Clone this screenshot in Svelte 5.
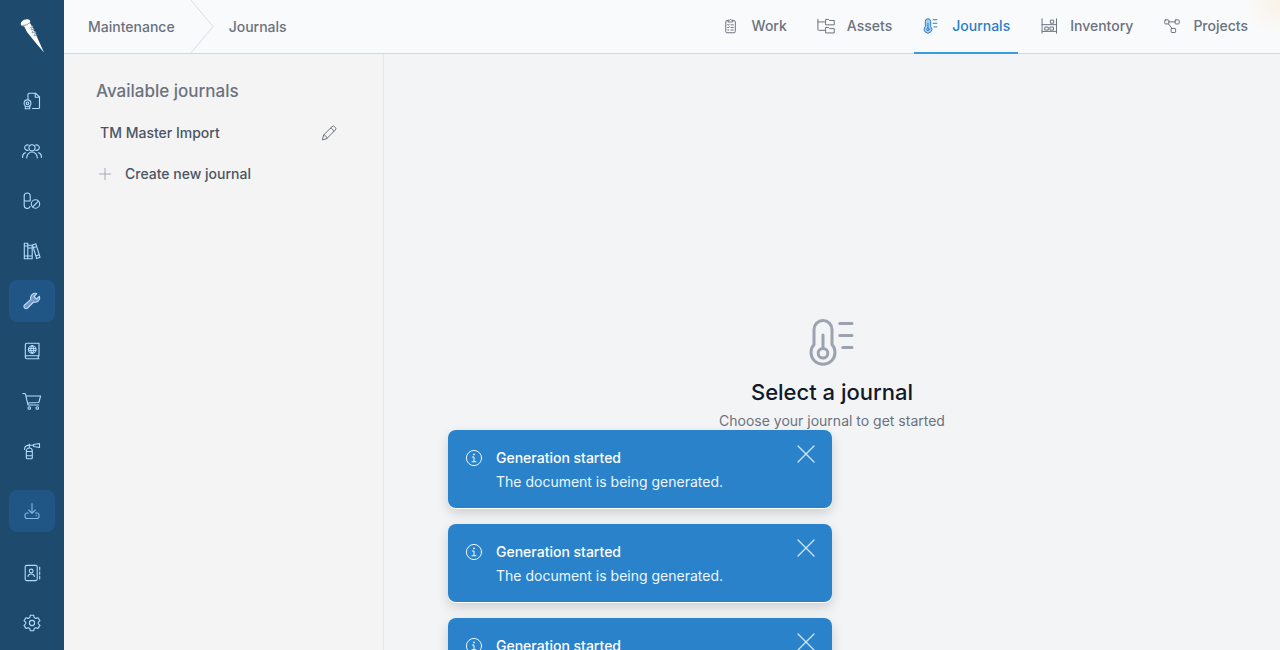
<script>
  const nav = [
    { id: 'certificates', label: 'Certificates' },
    { id: 'crew', label: 'Crew' },
    { id: 'medical', label: 'Medical' },
    { id: 'library', label: 'Library' },
    { id: 'maintenance', label: 'Maintenance', active: true },
    { id: 'logbook', label: 'Logbook' },
    { id: 'purchasing', label: 'Purchasing' },
    { id: 'safety', label: 'Safety' }
  ];
  const lower = [
    { id: 'contacts', label: 'Contacts' },
    { id: 'settings', label: 'Settings' }
  ];
  const tabs = [
    { id: 'work', label: 'Work' },
    { id: 'assets', label: 'Assets' },
    { id: 'journals', label: 'Journals', active: true },
    { id: 'inventory', label: 'Inventory' },
    { id: 'projects', label: 'Projects' }
  ];
  let toasts = $state([1, 2, 3]);
  const close = (id) => (toasts = toasts.filter((t) => t !== id));
</script>

{#snippet glyph(id)}
  <svg class="icon" viewBox="0 0 20 20" aria-hidden="true">
    {#if id === 'certificates'}
      <path d="M6 8V3.200a1 1 0 0 1 1-1h6.500L17.500 6v10.500a1 1 0 0 1-1 1h-6M13.200 2.200V6.300h4.300" />
      <circle cx="5.500" cy="12.300" r="3.400" /><circle cx="5.500" cy="12.300" r="1.300" />
      <path d="M3.300 15v2.800h4.400V15" />
    {:else if id === 'crew'}
      <circle cx="10" cy="6.800" r="3.100" />
      <path d="M4.800 17v-.8a5.200 5.200 0 0 1 10.400 0v.8M6.200 9.200a2.700 2.700 0 1 1 .1-5.100M13.800 9.200a2.700 2.700 0 1 0-.1-5.100M.6 16.500v-1a4 4 0 0 1 2.900-3.800M19.400 16.500v-1a4 4 0 0 0-2.900-3.800" />
    {:else if id === 'medical'}
      <path d="M8 15.500a3 3 0 0 1-5.800-1.200V5a3 3 0 0 1 6 0v5M2.200 10h6" />
      <circle cx="13.500" cy="13" r="4.200" /><path d="m10.600 16 5.900-5.900" />
    {:else if id === 'library'}
      <path d="M2.300 2.200h3.500v15.600H2.300zM5.800 4.200h4.400v13.600H5.800zM2.300 5h3.500M2.300 15h3.500M5.800 7h4.400M5.800 15h4.400" />
      <path d="m10.500 4 3.300-1.200 4.300 13.500-3.400 1.300zM11.300 6.700l3.400-1.200M13.900 15l3.300-1.200" />
    {:else if id === 'maintenance'}
      <path class="fill" d="M17.500 5.200 14.600 8 12 5.500l2.800-2.900a4.600 4.600 0 0 0-6 5.700L2.600 14a2 2 0 0 0 0 3 2 2 0 0 0 3 0l6-6a4.600 4.600 0 0 0 5.900-5.800Z" />
    {:else if id === 'logbook'}
      <path d="M17 15V2.300H4.800A1.500 1.500 0 0 0 3.300 3.800v12.500a1.500 1.500 0 0 0 1.500 1.500H17M17 14.800H4.800a1.500 1.500 0 0 0-1.500 1.500M16.200 15v2.700" />
      <circle cx="10.200" cy="8.500" r="3.800" /><path d="M6.500 7.500h7.400M6.500 9.500h7.400M10.200 4.700c-2 2-2 5.500 0 7.600 2-2.100 2-5.600 0-7.600" />
    {:else if id === 'purchasing'}
      <path d="M.8 2.500h1.700a1 1 0 0 1 1 .8L6 14h10.800M4 5h14.600l-1.800 6.500L5.500 12" />
      <circle cx="7.300" cy="17" r="1.300" /><circle cx="15.300" cy="17" r="1.300" />
    {:else if id === 'safety'}
      <path d="M4.300 10a3 3 0 0 1 6 0v6.800a1 1 0 0 1-1 1h-4a1 1 0 0 1-1-1zM4.300 10.500h6M4.300 14.800h6M7.300 7V3M5.500 4.300h6M11.500 3.500l6-1v4l-6-1zM2.500 8.500c0-3 1.700-4.200 4.800-4.200" />
    {:else if id === 'download'}
      <path d="M10 2.500v9.800M6.700 9l3.300 3.400L13.300 9M6.500 12H5a2 2 0 0 0-2 2v1.500a2 2 0 0 0 2 2h10a2 2 0 0 0 2-2V14a2 2 0 0 0-2-2h-1.500M14 14.700h.4" />
    {:else if id === 'contacts'}
      <rect x="3.200" y="2.400" width="12" height="15.200" rx="1.600" />
      <circle cx="9.200" cy="8" r="1.900" /><path d="M6 13.400c.3-3.300 6.100-3.300 6.400 0M17.700 4v3M17.700 8.700v2.700M17.700 13v3" />
    {:else if id === 'settings'}
      <circle cx="10" cy="10" r="2.600" />
      <path d="m8.300 2.200-.5 2.300-1.600.9-2.300-.7-1.900 3L3.700 9.200v1.700L2 12.400l1.900 3 2.300-.7 1.600.9.500 2.200h3.400l.5-2.200 1.600-.9 2.300.7 1.900-3-1.700-1.500V9.200L18 7.700l-1.900-3-2.300.7-1.600-.9-.5-2.300z" />
    {:else if id === 'work'}
      <path d="M6.800 4H5.500A1.300 1.300 0 0 0 4.200 5.300v10.900a1.300 1.300 0 0 0 1.300 1.300h8a1.300 1.300 0 0 0 1.300-1.300V5.300A1.300 1.300 0 0 0 13.500 4h-1.300M7 3.500h1.400a1.200 1.200 0 0 1 2.200 0H12v2H7zM6.300 8.500l.7.700 1-1.300M10 8.700h2.500M6.300 11.500l.7.700 1-1.300M10 11.700h2.500M6.500 14.500h1M10 14.500h2.500" />
    {:else if id === 'assets'}
      <path d="M1 2.500v11.300a1 1 0 0 0 1 1h6.500M1 5.500h7.500M10 2.700h3l1 1.200h5.200v4.800H10zM10 11.700h3l1 1.200h5.200v4.800H10z" />
    {:else if id === 'journals'}
      <path class="tint" d="M3.600 4.900a3 3 0 0 1 6 0v5.600a4.300 4.300 0 1 1-6 0z" />
      <circle cx="6.600" cy="13.700" r="1.400" /><path d="M6.600 12.300V7M12.300 3h4.200M12.300 7h4.200M13.300 11h3.200" />
    {:else if id === 'inventory'}
      <path d="M2.300 2v16M18.300 2v16M2.300 8.500h16M2.300 16h16M12 3.500h3.200v3.400H12zM5.700 11.200h3.500v3.300H5.700zM11.500 11.200H15v3.300h-3.500z" />
    {:else if id === 'projects'}
      <rect x="2" y="3.200" width="4.500" height="4.500" rx=".7" /><rect x="13.500" y="3.200" width="4.500" height="4.500" rx=".7" />
      <rect x="9" y="12.700" width="5" height="4.500" rx=".7" />
      <path d="M6.500 5.400h7M6 7.700l4 5" />
    {/if}
  </svg>
{/snippet}

<div class="app">
  <nav class="rail" aria-label="Modules">
    <a class="logo" href="#home" aria-label="Home">
      <svg width="26" height="36" viewBox="0 0 26 36" aria-hidden="true">
        <path d="M5 8 11 5 14 10 18 19 25 34.500 16 24 8 14Z" fill="#fff" />
        <path d="m11 10 3-2-2 4 3-1-2 4 4-1-2 4 3-1" fill="none" stroke="#8fa5b7" stroke-width="1" />
        <ellipse cx="6.500" cy="4.700" rx="5" ry="3.200" transform="rotate(-24 6.500 4.700)" fill="#fff" />
        <path d="M4 7.500q4 .3 6.500-2.500" fill="none" stroke="#7e98ae" />
      </svg>
    </a>
    {#each nav as item}
      <a class="module" class:active={item.active} href={'#' + item.id} aria-label={item.label}>{@render glyph(item.id)}</a>
    {/each}
    <button class="module download active" aria-label="Downloads">{@render glyph('download')}</button>
    {#each lower as item}
      <a class="module" href={'#' + item.id} aria-label={item.label}>{@render glyph(item.id)}</a>
    {/each}
  </nav>

  <div class="page">
    <header>
      <nav class="crumbs" aria-label="Breadcrumb">
        <a href="#maintenance">Maintenance</a>
        <svg width="24" height="53" viewBox="0 0 24 53" aria-hidden="true"><path d="M.5 -.5 23 26.500 .5 53.500" /></svg>
        <a href="#journals">Journals</a>
      </nav>
      <nav class="tabs" aria-label="Sections">
        {#each tabs as tab}
          <a class:current={tab.active} href={'#' + tab.id}>{@render glyph(tab.id)}{tab.label}</a>
        {/each}
      </nav>
    </header>

    <div class="body">
      <aside>
        <h2>Available journals</h2>
        <div class="row">
          <a href="#journal">TM Master Import</a>
          <button class="edit" aria-label="Edit journal">
            <svg width="16" height="16" viewBox="0 0 16 16" aria-hidden="true">
              <path d="M1.500 14.500 2.600 10 11 1.700a1.800 1.800 0 0 1 2.600 0l.7.700a1.800 1.800 0 0 1 0 2.600L6 13.400zM2.600 10c1.600.1 3.200 1.600 3.400 3.400M9.500 3.300c1.600.1 3 1.500 3.200 3.200" />
            </svg>
          </button>
        </div>
        <button class="create">
          <svg width="12" height="12" viewBox="0 0 12 12" aria-hidden="true"><path d="M6 0v12M0 6h12" /></svg>
          Create new journal
        </button>
      </aside>
      <main>
        <svg width="48" height="48" viewBox="0 0 48 48" aria-hidden="true">
          <path d="M6 10.500a9 9 0 0 1 18 0v14.900a12 12 0 1 1-18 0z" />
          <circle cx="15" cy="34.300" r="4.800" /><path d="M15 29.500V16M31.700 4.500H44M31.700 16.500H44M34.700 28.500H44" />
        </svg>
        <h1>Select a journal</h1>
        <p>Choose your journal to get started</p>
      </main>
    </div>
  </div>

  <div class="toasts" aria-live="polite">
    {#each toasts as id (id)}
      <div class="toast" role="status">
        <svg class="info" width="18" height="18" viewBox="0 0 18 18" aria-hidden="true">
          <circle cx="9" cy="9" r="7.600" /><path d="M7.300 8H9v4.700M7 12.700h4" /><circle class="dot" cx="9" cy="5.400" r=".9" />
        </svg>
        <div class="message">
          <strong>Generation started</strong>
          <span>The document is being generated.</span>
        </div>
        <button aria-label="Close" onclick={() => close(id)}>
          <svg width="18" height="18" viewBox="0 0 18 18" aria-hidden="true"><path d="m1 1 16 16M17 1 1 17" /></svg>
        </button>
      </div>
    {/each}
  </div>
</div>

<style>
  :global(body) { margin: 0; overflow: hidden; }
  * { box-sizing: border-box; }
  a { color: inherit; text-decoration: none; }
  button { padding: 0; border: 0; background: none; color: inherit; font: inherit; cursor: pointer; }
  svg { display: block; flex: none; fill: none; stroke: currentColor; stroke-linecap: round; stroke-linejoin: round; }
  .icon { width: 20px; height: 20px; stroke-width: 1.1; }
  .app {
    position: relative;
    display: flex;
    height: 100vh;
    overflow: hidden;
    background: #f2f4f6;
    font: 500 14px/20px Inter, sans-serif;
    color: #6b7280;
  }
  .rail {
    display: flex;
    flex-direction: column;
    align-items: center;
    gap: 8px;
    width: 64px;
    flex: none;
    padding-top: 18px;
    background: #1e4a6e;
    color: #b5dcff;
  }
  .logo { height: 54px; }
  .logo svg { stroke: none; }
  .module {
    display: grid;
    place-items: center;
    width: 46px;
    height: 42px;
    flex: none;
    border-radius: 8px;
  }
  .module.active { background: #1f5685; }
  .module .fill { fill: #7896b7; }
  .download { margin: 10px 0 12px; color: #82b6e4; }
  .page { display: flex; flex-direction: column; flex: 1; min-width: 0; }
  header {
    display: flex;
    justify-content: space-between;
    height: 54px;
    flex: none;
    padding: 0 24px;
    border-bottom: 1px solid #d1d8de;
    background: radial-gradient(circle at 100% 0, #f9f3e7 0, #f9fafb 36px);
  }
  .crumbs { display: flex; align-items: center; gap: 15px; }
  .crumbs svg { stroke: #d8dce1; }
  .tabs { display: flex; gap: 14px; }
  .tabs a {
    display: flex;
    align-items: center;
    gap: 12px;
    height: 54px;
    padding: 0 8px;
    border-bottom: 2px solid transparent;
  }
  .tabs .icon { width: 18px; height: 18px; }
  .tabs .current { border-color: #3b9ae1; color: #2b7fc8; }
  .tint { fill: #a9d0f3; }
  .body { display: flex; flex: 1; }
  aside {
    width: 320px;
    flex: none;
    padding: 24px 32px;
    border-right: 1px solid #e5e7eb;
    background: #f4f4f4;
    color: #4b5563;
  }
  h2 { margin: 0; font-size: 17px; line-height: 26px; font-weight: 500; color: #6b7280; }
  .row { display: flex; align-items: center; justify-content: space-between; margin-top: 19px; padding: 0 14px 0 4px; }
  .edit { color: #6b7280; }
  .create { display: flex; align-items: center; gap: 14px; margin-top: 21px; padding-left: 3px; }
  .create svg { color: #a5abb5; stroke-linecap: butt; }
  main { display: flex; flex: 1; flex-direction: column; align-items: center; padding-top: 265px; }
  main svg { color: #9ca3af; stroke-width: 3; }
  h1 { margin: 9px 0 0; font-size: 22px; line-height: 32px; font-weight: 500; color: #111827; }
  p { margin: 3px 0 0; font-weight: 400; }
  .toasts {
    position: absolute;
    top: 430px;
    left: 50%;
    display: grid;
    gap: 16px;
    width: 384px;
    transform: translateX(-50%);
  }
  .toast {
    display: flex;
    align-items: flex-start;
    gap: 13px;
    padding: 16px 17px 14px;
    border-radius: 8px;
    background: #2a82cb;
    box-shadow: 0 1px 0 #fff, 0 5px 12px rgba(0, 0, 0, 0.16);
    color: #ebf8ff;
  }
  .info { margin-top: 3px; }
  .info .dot { fill: currentColor; stroke: none; }
  .message { display: grid; flex: 1; line-height: 24px; }
  strong { font-weight: 500; color: #fff; }
  .message span { font-weight: 400; }
  .toast button { margin-top: -1px; color: #cfe6f9; }
  .toast button svg { stroke-width: 1.3; }
</style>
